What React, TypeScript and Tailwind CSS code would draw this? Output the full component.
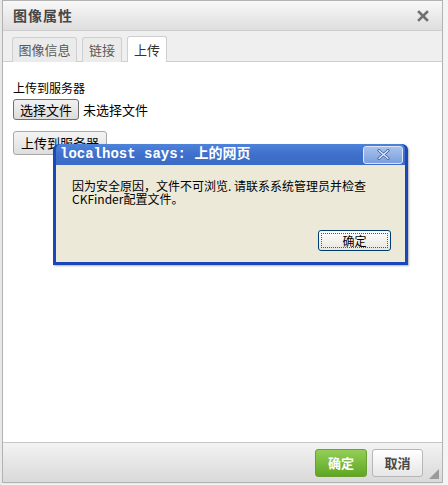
import React from "react";

const cjk = { fontFamily: '"Noto Sans CJK SC", "Liberation Sans", sans-serif' };

export default function App() {
  return (
    <div className="relative w-[448px] h-[485px] bg-white overflow-hidden" style={cjk}>
      {/* page behind */}
      <div className="absolute left-0 top-0 w-[2px] h-[485px] bg-[#e8e8e8]" />
      <div className="absolute right-0 top-0 w-[5px] h-[485px] bg-[#f4f4f4]" />
      <div className="ml-[2px] w-[441px] h-[483px] flex flex-col border border-[#b2b2b2] shadow-[0_0_3px_rgba(0,0,0,0.25)] bg-white">
        {/* title */}
        <div className="h-[30px] flex items-center justify-between px-[10px] bg-gradient-to-b from-[#f8f8f8] to-[#dedede] border-b border-[#cfcfcf]">
          <span className="text-[14px] font-bold text-[#474747] tracking-[1px]">图像属性</span>
          <svg width="12" height="12" viewBox="0 0 12 12" className="mr-[3px]">
            <path d="M2 2 L10 10 M10 2 L2 10" stroke="#707070" strokeWidth="2.6" strokeLinecap="square" />
          </svg>
        </div>
        {/* tabs */}
        <div className="h-[31px] flex items-end gap-[5px] pl-[9px] bg-[#efefef] border-b border-[#cfcfcf]">
          <div className="h-[25px] w-[65px] flex items-center justify-center text-[13px] text-[#595959] bg-[#ebebeb] border border-b-0 border-[#cfcfcf] rounded-t-[3px] -mb-px">图像信息</div>
          <div className="h-[25px] w-[40px] flex items-center justify-center text-[13px] text-[#595959] bg-[#ebebeb] border border-b-0 border-[#cfcfcf] rounded-t-[3px] -mb-px">链接</div>
          <div className="h-[26px] w-[40px] flex items-center justify-center text-[13px] text-[#333] bg-white border border-b-0 border-[#cfcfcf] rounded-t-[3px] -mb-px">上传</div>
        </div>
        {/* content */}
        <div className="flex-1 bg-white pl-[10px] pt-[19px]">
          <div className="text-[12px] leading-[14px] text-black">上传到服务器</div>
          <div className="flex items-center mt-[4px] gap-[4px]">
            <div className="h-[21px] w-[66px] flex items-center justify-center text-[13px] text-black rounded-[3px] border border-[#707070] bg-gradient-to-b from-[#f2f2f2] to-[#dcdcdc]">选择文件</div>
            <span className="text-[13px] text-black">未选择文件</span>
          </div>
          <div className="mt-[11px] h-[24px] w-[94px] flex items-center justify-center text-[13px] text-black rounded-[3px] border border-[#a8a8a8] bg-gradient-to-b from-[#f4f4f4] to-[#dedede]">上传到服务器</div>
        </div>
        {/* footer */}
        <div className="h-[40px] flex items-center justify-end gap-[5px] pr-[19px] bg-gradient-to-b from-[#f3f3f3] to-[#d9d9d9] border-t border-[#c6c6c6] relative">
          <div className="h-[28px] w-[52px] flex items-center justify-center text-[13px] font-bold text-white rounded-[3px] border border-[#6a9f34] bg-gradient-to-b from-[#93ce56] to-[#5fa71f]">确定</div>
          <div className="h-[28px] w-[51px] flex items-center justify-center text-[13px] font-bold text-[#474747] rounded-[3px] border border-[#b6b6b6] bg-gradient-to-b from-[#ffffff] to-[#e6e6e6]">取消</div>
          <svg width="10" height="10" viewBox="0 0 10 10" className="absolute right-[3px] bottom-[3px]">
            <path d="M10 0 L10 10 L0 10 Z" fill="#9a9a9a" />
          </svg>
        </div>
      </div>

      {/* alert overlay */}
      <div className="absolute left-[53px] top-[144px] w-[355px] h-[121px] flex flex-col rounded-t-[6px] bg-[#1c47b8] p-[3px] pt-0 shadow-[1px_1px_2px_rgba(0,0,0,0.3)]">
        <div className="h-[21px] flex items-center justify-between pl-[4px] pr-[2px] rounded-t-[5px] bg-gradient-to-b from-[#4f83d9] via-[#3e70cc] to-[#3b6bc4]">
          <span className="text-[14px] font-bold text-white" style={{ fontFamily: '"Liberation Mono", "Noto Sans CJK SC", monospace' }}>localhost says: 上的网页</span>
          <div className="h-[18px] w-[40px] flex items-center justify-center rounded-[3px] border border-[#dbe6f6] bg-gradient-to-b from-[#a9c2ec] to-[#7b9fdf]">
            <svg width="13" height="11" viewBox="0 0 13 11">
              <path d="M2 1.5 L11 9.5 M11 1.5 L2 9.5" stroke="#3b5fa8" strokeWidth="3" strokeLinecap="round" />
              <path d="M2 1.5 L11 9.5 M11 1.5 L2 9.5" stroke="#e8eefa" strokeWidth="1.3" strokeLinecap="round" />
            </svg>
          </div>
        </div>
        <div className="flex-1 bg-[#ece9d8] flex flex-col pl-[16px] pt-[14px]">
          <div className="text-[12px] leading-[13px] text-black">
            因为安全原因，文件不可浏览. 请联系系统管理员并检查<br />CKFinder配置文件。
          </div>
          <div className="flex justify-end pr-[14px] mt-[25px]">
            <div className="h-[21px] w-[73px] rounded-[3px] border border-[#003c74] bg-gradient-to-b from-[#ffffff] to-[#e8e6dc] p-[2px]">
              <div className="h-full w-full border border-dotted border-[#555] flex items-center justify-center text-[12px] text-black">确定</div>
            </div>
          </div>
        </div>
      </div>
    </div>
  );
}
